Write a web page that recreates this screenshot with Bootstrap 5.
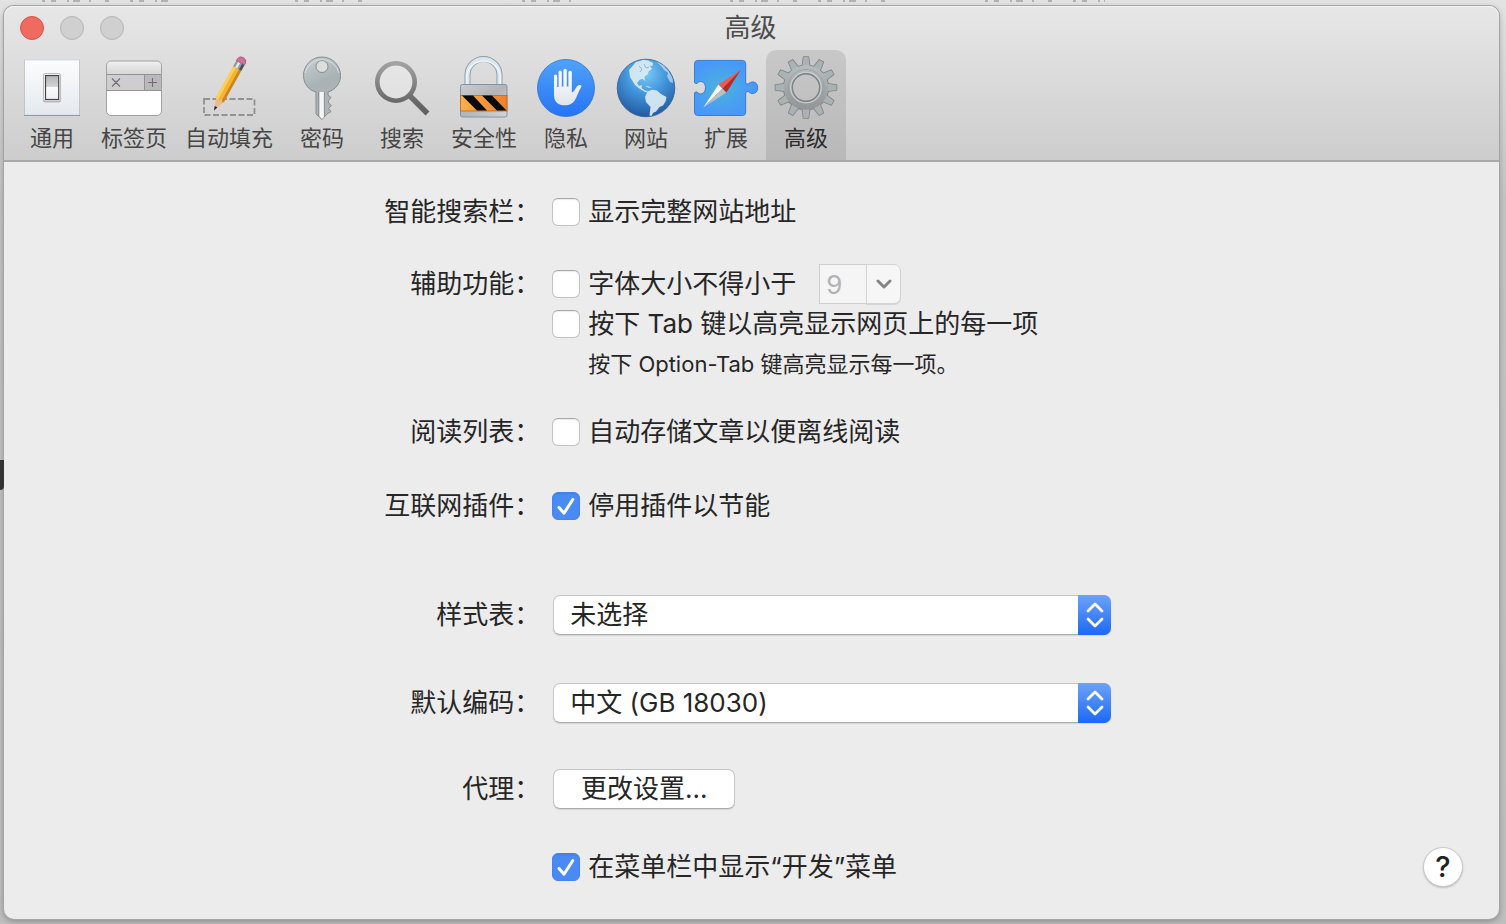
<!DOCTYPE html>
<html lang="zh-CN">
<head>
<meta charset="utf-8">
<meta name="viewport" content="width=device-width, initial-scale=1">
<title>高级</title>
<link href="https://cdn.jsdelivr.net/npm/bootstrap@5.3.0/dist/css/bootstrap.min.css" rel="stylesheet">
<style>
  body {
    font-family: Inter, "Noto Sans CJK SC", sans-serif;
    font-size: 26px;
    line-height: 40px;
    color: #262626;
    background: linear-gradient(#e3e3e3 0, #c4c4c4 200px, #bebebe 100%);
    padding: 6px 7px 6px 4px;
  }
  .desk-text { top: 0; left: 0; width: 74%; height: 2px; opacity: .35; }
  .desk-item { top: 460px; left: 0; width: 4px; height: 30px; background: #333; border-bottom-right-radius: 4px; }
  .pref-window {
    min-height: calc(100vh - 12px);
    background: #ececec;
    border-radius: 10px;
    box-shadow: 0 0 0 1px #a5a5a5, 0 2px 6px rgba(0, 0, 0, .3);
  }
  .pref-head {
    background: linear-gradient(#e7e7e7, #cdcdcd);
    border-bottom: 2px solid #a9a9a9;
    box-shadow: inset 0 1px 0 #f4f4f4;
    border-radius: 10px 10px 0 0;
    color: #464646;
  }
  .title-row { display: grid; grid-template-columns: 1fr auto 1fr; height: 44px; padding: 0 18px 0 16px; color: #4c4c4c; }
  .light { width: 24px; height: 24px; padding: 0; border-radius: 50%; border: 1px solid #b4b4b4; background: #d0d0d0; }
  .light-close { background: #ef6b60; border-color: #dc5148; }
  .tool-row { padding: 0 8px; }
  .tool {
    min-width: 80px; height: 110px; padding: 6px 9px 0; border: 0; background: none; color: inherit;
    font-size: 22px; line-height: 36px; border-radius: 10px 10px 0 0;
  }
  .tool svg { width: 64px; height: 64px; margin: 0 -1px; overflow: visible; }
  .tool.active { background: linear-gradient(#c8c8c8, #b8b8b8); color: #2b2b2b; }

  .form-area { padding: 30px 0 32px; }
  .pref { display: grid; grid-template-columns: 36% 1fr; column-gap: 10px; min-height: 40px; }
  .pref-name { text-align: right; white-space: nowrap; padding-right: 2px; }
  .pref-xs { margin-top: 28px; }
  .pref-s { margin-top: 32px; }
  .pref-m { margin-top: 34px; }
  .pref-end { margin-top: 38px; }
  .pref-proxy { margin-top: 46px; }
  .pref-l { margin-top: 48px; }
  .pref-xl { margin-top: 69px; }
  .form-check-input.tick {
    width: 28px; height: 28px; margin: 0 8px 0 0; flex: none; float: none;
    border: 1px solid #c3c3c3; border-top-color: #a8a8a8; border-radius: 6px; background-color: #fff;
    box-shadow: inset 0 1px 1px rgba(0, 0, 0, .08);
  }
  .form-check-input.tick:checked {
    background-color: #4a8af5; border-color: #4483f0; background-size: 28px 28px; background-position: center;
    background-image: url("data:image/svg+xml,%3Csvg xmlns='http://www.w3.org/2000/svg' viewBox='0 0 28 28'%3E%3Cpath d='M7 15.500L12 21.200L20.800 7.500' fill='none' stroke='%23fff' stroke-width='3' stroke-linecap='round' stroke-linejoin='round'/%3E%3C/svg%3E");
  }
  .hint { font-size: 22px; padding-left: 36px; }
  .size-box { width: 82px; margin-left: 23px; }
  .size-box .form-control {
    height: 40px; padding: 0 6px; font-size: 26px; color: #b2b2b2; background: #f5f5f5;
    border: 1px solid #cfcfcf; border-radius: 0;
  }
  .size-box .btn {
    width: 35px; height: 40px; padding: 0; display: flex; align-items: center; justify-content: center;
    background: #f6f6f6; border: 1px solid #d4d4d4; border-radius: 0 7px 7px 0; opacity: 1; box-shadow: 0 1px 1px rgba(0, 0, 0, .1);
  }
  .popup { max-width: 558px; margin-left: 1px; }
  .popup .form-select, .btn-mac {
    height: 40px; font-size: 26px; line-height: 36px; color: #262626; background: #fff;
    border: 1px solid #c6c6c6; border-bottom-color: #acacac; border-radius: 7px; box-shadow: 0 1px 1px rgba(0, 0, 0, .1);
  }
  .popup .form-select { padding: 0 40px 0 16px; }
  .popup .stepper {
    top: 0; right: 0; width: 33px; height: 40px; border-radius: 0 7px 7px 0; pointer-events: none;
    background: linear-gradient(#6ca3f7, #1c69f6);
  }
  .btn-mac { width: 182px; margin-left: 1px; padding: 0; }
  .btn-help {
    width: 40px; height: 40px; margin-right: 36px; padding: 0; font-size: 29px; font-weight: 500; line-height: 38px; color: #222;
    background: #fff; border: 1px solid #c8c8c8; border-radius: 50%; box-shadow: 0 1px 2px rgba(0, 0, 0, .2);
  }
</style>
</head>
<body>
<svg class="desk-text position-absolute" aria-hidden="true"><path d="M42 1H172M295 1H375M522 1H585M730 1H900M985 1H1105" stroke="#555" stroke-width="2" stroke-dasharray="3 6 5 11 2 4 7 9 2 14 4 21"/></svg>
<div class="desk-item position-absolute"></div>

<main class="pref-window d-flex flex-column">
  <header class="pref-head">
    <div class="title-row align-items-center">
      <div class="d-flex" style="gap:16px">
        <button class="light light-close" type="button" aria-label="关闭"></button>
        <button class="light" type="button" aria-label="最小化" disabled></button>
        <button class="light" type="button" aria-label="缩放" disabled></button>
      </div>
      <div>高级</div>
    </div>
    <nav class="tool-row d-flex">
      <button class="tool d-flex flex-column align-items-center" type="button">
        <svg viewBox="0 0 64 64"><defs>
          <linearGradient id="plate" x2="0" y2="1"><stop stop-color="#fdfdfe"/><stop offset="1" stop-color="#e4e9ee"/></linearGradient>
          <linearGradient id="rocker" x2="0" y2="1"><stop stop-color="#b2b4b6"/><stop offset=".48" stop-color="#d3d5d7"/><stop offset=".5" stop-color="#fafbfc"/><stop offset="1" stop-color="#eceef1"/></linearGradient></defs>
          <rect x="4" y="4" width="56" height="56" fill="#7f868c"/><rect x="4.500" y="4" width="55" height="55" fill="url(#plate)" stroke="#c9ced2" stroke-width=".6"/>
          <rect x="23" y="17.500" width="18" height="29" rx="2" fill="#8c8c8c" opacity=".5"/>
          <rect x="23.500" y="17.500" width="17" height="27.500" rx="2" fill="#fff" stroke="#aaa" stroke-width=".7"/>
          <rect x="25.500" y="19.500" width="13.200" height="24" fill="url(#rocker)" stroke="#444" stroke-width="1.200"/></svg>
        通用</button>
      <button class="tool d-flex flex-column align-items-center" type="button">
        <svg viewBox="0 0 64 64"><defs><linearGradient id="tabTop" x2="0" y2="1"><stop stop-color="#f2f2f2"/><stop offset="1" stop-color="#d5d4d6"/></linearGradient><clipPath id="tabClip"><rect x="4.500" y="5" width="55" height="54.500" rx="4.500"/></clipPath></defs>
          <g clip-path="url(#tabClip)"><rect x="4" y="4" width="56" height="56" fill="#fff"/><rect x="4" y="4" width="56" height="15" fill="url(#tabTop)"/><rect x="4" y="18.500" width="56" height="16" fill="#cfcdd0"/><rect x="42" y="18.500" width="18" height="16" fill="#bab8bb"/><path d="M4 18.500H60M4 34.500H60M42.500 18.500V34.500" stroke="#929292"/></g>
          <rect x="4.500" y="5" width="55" height="54.500" rx="4.500" fill="none" stroke="#999" stroke-width=".9"/>
          <path d="M10 22.500L18 30.500M18 22.500L10 30.500M50.500 22V31M46 26.500H55" stroke="#6d6d6d" stroke-width="1.100"/></svg>
        标签页</button>
      <button class="tool d-flex flex-column align-items-center" type="button">
        <svg viewBox="0 0 64 64"><rect x="7" y="43" width="50.500" height="16" fill="none" stroke="#929292" stroke-width="1.800" stroke-dasharray="6 2.500"/>
          <g transform="translate(17 54.500) rotate(29)">
            <path d="M0 0L-4.600 -13V-48H4.600V-13Z" fill="#edb98a"/><path d="M0 0L-1.500 -4.200H1.500Z" fill="#222"/>
            <path d="M-4.600 -12V-48H-1.600V-14L-3 -11Z" fill="#fbd155"/><path d="M-1.600 -14V-48H1.900V-14L0 -11Z" fill="#f5b52e"/><path d="M1.900 -14V-48H4.600V-12L3 -11Z" fill="#cd8417"/>
            <path d="M-4.600 -48V-54.500H4.600V-48Z" fill="#8c979f"/><path d="M-2.500 -48V-54.500H0V-48Z" fill="#dfe8ed"/><path d="M2 -48V-54.500H4.600V-48Z" fill="#4b4e52"/>
            <path d="M-4.600 -54.500V-57Q-4 -60.500 0 -60.500T4.600 -57V-54.500Z" fill="#d07098" stroke="#9e4d6e" stroke-width=".6"/></g></svg>
        自动填充</button>
      <button class="tool d-flex flex-column align-items-center" type="button">
        <svg viewBox="0 0 64 64"><defs><linearGradient id="keyFill" x2=".3" y2="1"><stop stop-color="#c9d0d3"/><stop offset=".5" stop-color="#a9b2b5"/><stop offset="1" stop-color="#b0b5b7"/></linearGradient></defs>
          <path fill-rule="evenodd" d="M26 36C18 34 13.500 27 13.500 19.500A18.500 18.500 0 0 1 50.500 19.500C50.500 27 46 33.500 38 36V39L41 41.500L38.500 44.500V47L41.500 49.500L38.500 52.500L41 55.500L37 58L32 63.500L26 58ZM32 4.500A6 6 0 1 0 32 16.500A6 6 0 1 0 32 4.500Z" fill="url(#keyFill)" stroke="#858c8e" stroke-width="1"/>
          <path d="M29.500 36H33.800V61L32 63L29.500 60Z" fill="#f3f5f6"/><path d="M28.500 36V60M34.500 36V60" stroke="#858b8e" stroke-width=".8"/><path d="M15 17A17.500 17.500 0 0 1 49 17" fill="none" stroke="#dde2e4" stroke-width=".9"/></svg>
        密码</button>
      <button class="tool d-flex flex-column align-items-center" type="button">
        <svg viewBox="0 0 64 64"><defs><linearGradient id="lens" gradientUnits="userSpaceOnUse" x1="0" y1="5" x2="0" y2="60"><stop stop-color="#a5a5a5"/><stop offset=".7" stop-color="#6c6c6c"/><stop offset="1" stop-color="#5d5d5d"/></linearGradient></defs>
          <circle cx="26" cy="26" r="17" fill="#fff" opacity=".25"/><circle cx="26" cy="26" r="18.700" fill="none" stroke="url(#lens)" stroke-width="4.600"/><path d="M39.500 39.500L57.500 57.500" stroke="url(#lens)" stroke-width="5.500"/></svg>
        搜索</button>
      <button class="tool d-flex flex-column align-items-center" type="button">
        <svg viewBox="0 0 64 64"><defs><linearGradient id="lockFill" x2="1" y2="1"><stop stop-color="#c9ccd1"/><stop offset=".5" stop-color="#b1b4b9"/><stop offset="1" stop-color="#d2d5da"/></linearGradient><linearGradient id="band"><stop stop-color="#f9b04a"/><stop offset="1" stop-color="#ee7f2c"/></linearGradient></defs>
          <path d="M15.500 29V19A16 16 0 0 1 47.500 19V29" fill="none" stroke="#8c9dab" stroke-width="6"/><path d="M15.500 29V19A16 16 0 0 1 47.500 19V29" fill="none" stroke="#dbe5eb" stroke-width="4.200"/><path d="M14.800 29V19A17 17 0 0 1 48.200 19V29" fill="none" stroke="#f5f9fb" stroke-width="1.200"/>
          <rect x="8.500" y="28.500" width="46.500" height="32.500" rx="2" fill="url(#lockFill)" stroke="#8693a5"/>
          <rect x="8.500" y="39.500" width="46.500" height="15.500" fill="url(#band)" stroke="#b56b27" stroke-width=".8"/><path d="M10 39.500H21L35 54.500H25ZM30 39.500H40L54.500 54.500H45Z" fill="#0b0b0b"/></svg>
        安全性</button>
      <button class="tool d-flex flex-column align-items-center" type="button">
        <svg viewBox="0 0 64 64"><defs><linearGradient id="blue" x2="0" y2="1"><stop stop-color="#50a3f8"/><stop offset="1" stop-color="#2673f4"/></linearGradient><linearGradient id="palm" x2="0" y2="1"><stop stop-color="#fff"/><stop offset="1" stop-color="#dfe5ec"/></linearGradient></defs>
          <circle cx="32" cy="32" r="28.500" fill="url(#blue)" stroke="#2c74dc" stroke-width=".8"/>
          <path d="M20 20A1.600 1.600 0 0 1 23.200 20V31H24.600V16A1.600 1.600 0 0 1 27.800 16V30.500H29.400V14.500A1.700 1.700 0 0 1 32.800 14.500V30.500H34.400V16.500A1.700 1.700 0 0 1 37.800 16.500V36.500C41 36 41.500 30.500 44.500 29.300C46.500 28.600 48 29.500 47.200 31C44.500 35 43.500 40 41 44C38.500 47.700 35.500 49.300 31.500 49.300C24 49.300 20 46 20 39Z" fill="url(#palm)"/></svg>
        隐私</button>
      <button class="tool d-flex flex-column align-items-center" type="button">
        <svg viewBox="0 0 64 64"><defs><radialGradient id="sea" cx=".5" cy=".25" r=".78"><stop stop-color="#7ccaf5"/><stop offset=".45" stop-color="#4296dc"/><stop offset="1" stop-color="#21559b"/></radialGradient></defs>
          <circle cx="32" cy="32" r="28.800" fill="url(#sea)" stroke="#335e8f" stroke-width=".8"/>
          <g fill="#dcebf3" opacity=".92"><path d="M15 14L22 6L26 5L29 3.800L34 4.500L39 7L38.500 10L35.500 9.500L38 13L34.500 15.500L34 18L30.500 20.500L31 25L29 23L26 23.500L23 27L25 30L28 29L27.500 32L31 34.500L34 35L32 36.500L26 33L21 29L18.500 25L16 21L15.500 17Z"/><path d="M33.500 35.500L38 33.800L43 34.500L47 38L52.500 41L51.500 45.500L49 49.500L45.500 51L42 55.500L39 57L37.500 60L35.500 59.500L36.500 51L32 46L31 41Z"/><path d="M42 5.500L49 9L54.500 15L58.500 22L59 27L56 26L53 20L54 17L50 14L47.500 10.500Z" opacity=".7"/><path d="M31 29.500L35 30.500L38 32L34 31.500Z"/></g>
          <path d="M25 10L28 13L26 16M30 8L32 12L35 11" fill="none" stroke="#86bbdd" stroke-width="1"/></svg>
        网站</button>
      <button class="tool d-flex flex-column align-items-center" type="button">
        <svg viewBox="0 0 64 64"><defs><radialGradient id="ext" cx=".42" cy=".5" r=".5"><stop stop-color="#4ab4dc"/><stop offset="1" stop-color="#4997f8"/></radialGradient></defs>
          <path d="M3.500 4.400H48.500Q51.700 4.400 51.700 8V26.500Q52 28.500 54.500 28C56 25 63.700 24.500 63.700 31.700S56 38.500 54.500 35.500Q52 35 51.700 37V56Q51.700 59.500 48.500 59.500H4Q.5 59.500 .5 56V37Q1 35.500 3 36C5 39.500 11.500 38.500 11.500 31.700S5 24 3 27.500Q1 28 .5 26.500V8Q.5 4.400 3.500 4.400Z" fill="url(#ext)" stroke="#3277c8" stroke-width=".9"/>
          <path d="M9.300 51.500L24.500 28.500L28.500 32.500Z" fill="#fafafa"/><path d="M9.300 51.500L28.500 32.500L32.500 36.500Z" fill="#babfc2"/><path d="M46.700 14L24.500 28.500L28.500 32.500Z" fill="#ee5a4d"/><path d="M46.700 14L28.500 32.500L32.500 36.500Z" fill="#b92a25"/></svg>
        扩展</button>
      <button class="tool active d-flex flex-column align-items-center" type="button" aria-current="page">
        <svg viewBox="0 0 64 64"><defs><linearGradient id="gear" gradientUnits="userSpaceOnUse" x1="0" y1="-30" x2="0" y2="30"><stop stop-color="#bcc4c6"/><stop offset="1" stop-color="#8c8d90"/></linearGradient>
          <g id="teeth4"><path id="tooth" d="M-3.700 -21L-2.400 -30.500H2.400L3.700 -21Z"/><use href="#tooth" transform="rotate(90)"/><use href="#tooth" transform="rotate(180)"/><use href="#tooth" transform="rotate(270)"/></g>
          <g id="teeth"><use href="#teeth4"/><use href="#teeth4" transform="rotate(30)"/><use href="#teeth4" transform="rotate(60)"/></g></defs>
          <g transform="translate(32 31.500)"><g fill="#7d8385" stroke="#7d8385" stroke-width="1.600" stroke-linejoin="round"><use href="#teeth"/></g><circle r="18.300" fill="none" stroke="#7d8385" stroke-width="9.600"/>
          <g fill="#abb2b4"><use href="#teeth"/></g><circle r="18.200" fill="none" stroke="url(#gear)" stroke-width="8"/><circle r="18" fill="none" stroke="#92989a" stroke-width=".6"/><circle r="15.300" fill="none" stroke="#c9cfd1" stroke-width="1.200"/><circle r="13.600" fill="none" stroke="#7d8385" stroke-width="1.200"/></g></svg>
        高级</button>
    </nav>
  </header>

  <form class="form-area flex-grow-1">
    <div class="pref">
      <div class="pref-name">智能搜索栏：</div>
      <div class="d-flex align-items-center"><input class="form-check-input tick" type="checkbox" id="fullUrl"><label for="fullUrl">显示完整网站地址</label></div>
    </div>
    <div class="pref pref-s">
      <div class="pref-name">辅助功能：</div>
      <div>
        <div class="d-flex align-items-center"><input class="form-check-input tick" type="checkbox" id="minFont"><label for="minFont">字体大小不得小于</label>
          <div class="input-group flex-nowrap size-box"><input class="form-control" type="text" value="9" aria-label="最小字体大小" disabled><button class="btn" type="button" aria-label="选择字体大小" disabled><svg width="16" height="10" viewBox="0 0 16 10"><path d="M2 2L8 8L14 2" fill="none" stroke="#858585" stroke-width="3" stroke-linecap="round" stroke-linejoin="round"/></svg></button></div>
        </div>
        <div class="d-flex align-items-center"><input class="form-check-input tick" type="checkbox" id="tabKey"><label for="tabKey">按下 Tab 键以高亮显示网页上的每一项</label></div>
        <div class="hint">按下 Option-Tab 键高亮显示每一项。</div>
      </div>
    </div>
    <div class="pref pref-xs">
      <div class="pref-name">阅读列表：</div>
      <div class="d-flex align-items-center"><input class="form-check-input tick" type="checkbox" id="offline"><label for="offline">自动存储文章以便离线阅读</label></div>
    </div>
    <div class="pref pref-m">
      <div class="pref-name">互联网插件：</div>
      <div class="d-flex align-items-center"><input class="form-check-input tick" type="checkbox" id="plugins" checked><label for="plugins">停用插件以节能</label></div>
    </div>
    <div class="pref pref-xl">
      <label class="pref-name" for="sheet">样式表：</label>
      <div class="popup position-relative"><select class="form-select" id="sheet"><option>未选择</option></select>
        <span class="stepper position-absolute d-flex align-items-center justify-content-center"><svg width="18" height="28" viewBox="0 0 18 28"><path d="M2 10L9 3L16 10M2 18L9 25L16 18" fill="none" stroke="#fff" stroke-width="2.800" stroke-linecap="round" stroke-linejoin="round"/></svg></span></div>
    </div>
    <div class="pref pref-l">
      <label class="pref-name" for="encoding">默认编码：</label>
      <div class="popup position-relative"><select class="form-select" id="encoding"><option>中文 (GB 18030)</option></select>
        <span class="stepper position-absolute d-flex align-items-center justify-content-center"><svg width="18" height="28" viewBox="0 0 18 28"><path d="M2 10L9 3L16 10M2 18L9 25L16 18" fill="none" stroke="#fff" stroke-width="2.800" stroke-linecap="round" stroke-linejoin="round"/></svg></span></div>
    </div>
    <div class="pref pref-proxy">
      <div class="pref-name">代理：</div>
      <div><button class="btn btn-mac d-block" type="button">更改设置...</button></div>
    </div>
    <div class="pref pref-end">
      <div></div>
      <div class="d-flex align-items-center"><input class="form-check-input tick" type="checkbox" id="develop" checked><label for="develop">在菜单栏中显示“开发”菜单</label>
        <button class="btn btn-help ms-auto" type="button" aria-label="帮助">?</button></div>
    </div>
  </form>
</main>
<script src="https://cdn.jsdelivr.net/npm/bootstrap@5.3.0/dist/js/bootstrap.bundle.min.js"></script>
</body>
</html>
